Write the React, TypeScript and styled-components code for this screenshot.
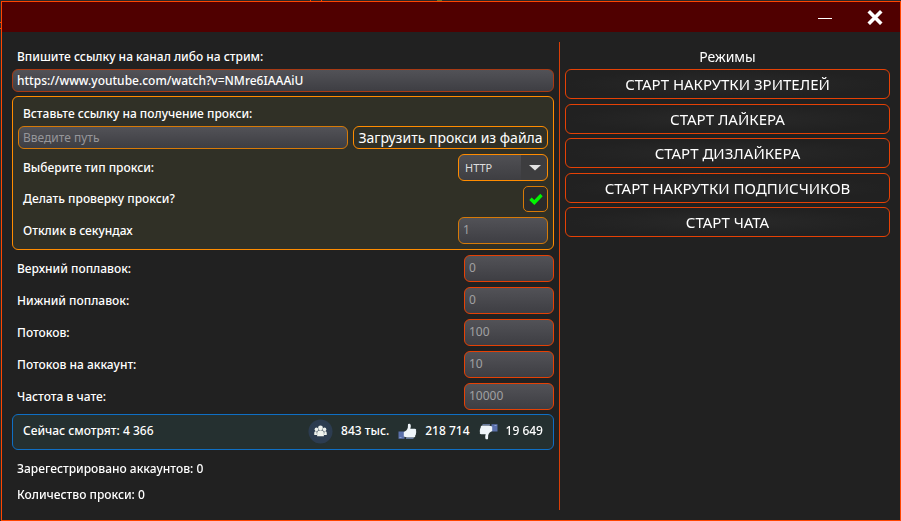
import React, { useEffect, useRef } from "react";
import styled, { createGlobalStyle, css } from "styled-components";

const orange = "#ff4500";
const amber = "#ff8c00";

const GlobalStyle = createGlobalStyle`
  * { box-sizing: border-box; }
  body {
    margin: 0;
    background: #2b2b2b;
    color: #ffffff;
    font-family: "Comic Sans MS", "Noto Sans", sans-serif;
    font-size: 12px;
    line-height: 18px;
  }
  button, input, select { font: inherit; color: inherit; margin: 0; }
`;

const Backdrop = styled.div`
  min-height: 100vh;
  padding: 1px 0 0 1px;
  display: flex;
  background:
    linear-gradient(#66752e, #66752e) 437px 0 / 5px 1px no-repeat,
    linear-gradient(${orange}, ${orange}) 310px 0 / 1px 1px no-repeat,
    linear-gradient(${orange}, ${orange}) 321px 0 / 1px 1px no-repeat,
    linear-gradient(${orange}, ${orange}) 0 22px / 1px 1px no-repeat,
    linear-gradient(${orange}, ${orange}) 0 28px / 1px 1px no-repeat,
    #2b2b2b;
`;

const Window = styled.main`
  flex: 1;
  display: flex;
  flex-direction: column;
  border: 1px solid ${orange};
  background: #212121;
`;

const TitleBar = styled.header`
  display: flex;
  justify-content: flex-end;
  height: 30px;
  background: #500000;
`;

const TitleButton = styled.button`
  display: grid;
  place-items: center;
  width: 50px;
  padding: 0;
  border: 0;
  background: transparent;
`;

const Body = styled.div`
  flex: 1;
  display: grid;
  grid-template-columns: minmax(0, 558fr) minmax(0, 340fr);
  padding: 10px 0;
`;

const Settings = styled.section`
  padding: 6px 5px 0 10px;
  border-right: 1px solid #d93e06;
`;

const Modes = styled.section`
  padding: 6px 10px 0 5px;
`;

const Label = styled.label<{ $inset?: number }>`
  display: block;
  font-weight: 500;
  padding-left: ${(p) => p.$inset ?? 0}px;
`;

const fieldLook = css<{ $accent: string }>`
  border: 1px solid ${(p) => p.$accent};
  border-radius: 6px;
  background: linear-gradient(#525257, #3e3e43);
  outline: none;
`;

const TextField = styled.input<{ $accent: string }>`
  ${fieldLook}
  display: block;
  width: 100%;
  min-width: 0;
  height: 23px;
  padding: 0 4px;
  &::placeholder { color: #96969a; opacity: 1; }
`;

const UrlField = styled(TextField)`
  margin: 3px 0 4px;
  font-weight: 500;
  caret-color: #000000;
`;

const NumberField = styled.input<{ $accent: string }>`
  ${fieldLook}
  width: 90px;
  height: 27px;
  padding: 0 4px 2px;
  color: #a0a0a2;
`;

const ProxyGroup = styled.section`
  display: flex;
  flex-direction: column;
  gap: 5px;
  padding: 8px 5px 5px;
  border: 1px solid ${amber};
  border-radius: 6px;
  background: #303026;
`;

const PathBlock = styled.div`
  display: grid;
  gap: 3px;
`;

const PathRow = styled.div`
  display: flex;
  gap: 5px;
`;

const LoadButton = styled.button`
  flex: none;
  width: 195px;
  height: 23px;
  padding: 0;
  border: 1px solid ${amber};
  border-radius: 6px;
  background: transparent;
  font-size: 14px;
  white-space: nowrap;
`;

const Row = styled.div`
  display: flex;
  align-items: center;
  justify-content: space-between;
`;

const Rows = styled.div`
  display: grid;
  gap: 5px;
  margin: 5px 0 4px;
`;

const SelectBox = styled.div`
  display: grid;
  width: 90px;
  height: 27px;
  > * { grid-area: 1 / 1; }
  svg { justify-self: end; align-self: center; margin-right: 7px; pointer-events: none; }
`;

const TypeSelect = styled.select`
  appearance: none;
  width: 100%;
  padding: 0 6px;
  border: 1px solid ${amber};
  border-radius: 6px;
  outline: none;
  background: linear-gradient(90deg, transparent 62px, #3d3d3f 62px), linear-gradient(#505054, #3e3e42);
  font-size: 11px;
  color: #dedede;
`;

const CheckBox = styled.div`
  display: grid;
  width: 25px;
  height: 26px;
  > * { grid-area: 1 / 1; }
  svg { place-self: center; pointer-events: none; visibility: hidden; }
  input:checked + svg { visibility: visible; }
`;

const CheckInput = styled.input`
  appearance: none;
  width: 100%;
  height: 100%;
  border: 1px solid #d77a08;
  border-radius: 5px;
  background: #2b2b2b;
`;

const Stats = styled.div`
  display: flex;
  align-items: center;
  justify-content: space-between;
  height: 36px;
  padding: 0 10px;
  border: 1px solid #0f6fc4;
  border-radius: 6px;
  background: #253030;
  font-weight: 500;
  padding-bottom: 2px;
`;

const Counters = styled.div`
  display: flex;
  align-items: center;
  gap: 9px;
`;

const Counter = styled.span`
  display: flex;
  align-items: center;
  gap: 8px;
`;

const Totals = styled.div`
  display: grid;
  gap: 8px;
  padding: 10px 5px 0;
  font-weight: 500;
`;

const ModesTitle = styled.h2`
  margin: 0 0 3px;
  font-size: 14px;
  font-weight: 400;
  line-height: 18px;
  text-align: center;
`;

const ModeList = styled.div`
  display: flex;
  flex-direction: column;
  justify-content: space-between;
  min-height: 168px;
`;

const ModeButton = styled.button`
  height: 30px;
  padding: 0;
  border: 1px solid #e54105;
  border-radius: 6px;
  background: radial-gradient(ellipse at center, #292929, #212121 70%);
  font-size: 15px;
`;

const MinimizeIcon = () => (
  <svg width="16" height="16" viewBox="0 0 16 16" aria-hidden="true">
    <path d="M1 9.5h14" stroke="#fff" />
  </svg>
);

const CloseIcon = () => (
  <svg width="16" height="16" viewBox="0 0 16 16" aria-hidden="true">
    <path d="M3 3.500l10 10M13 3.500L3 13.500" stroke="#fff" strokeWidth="3.600" strokeLinecap="square" />
  </svg>
);

const ArrowIcon = () => (
  <svg width="12" height="6" viewBox="0 0 12 6" aria-hidden="true">
    <path d="M0 0h12L6 5.5z" fill="#e2e2e2" />
  </svg>
);

const CheckIcon = () => (
  <svg width="14" height="12" viewBox="0 0 14 12" aria-hidden="true">
    <path d="M1.500 5.800l3.800 3.700L12.500 2" fill="none" stroke="#00f600" strokeWidth="3.400" />
  </svg>
);

const PeopleIcon = () => (
  <svg width="25" height="25" viewBox="0 0 26 26" aria-hidden="true">
    <circle cx="13" cy="13" r="12.5" fill="#2c3c50" />
    <g fill="#eef2ee">
      <circle cx="13" cy="9.3" r="2.5" />
      <circle cx="8.8" cy="10.8" r="1.9" />
      <circle cx="17.2" cy="10.8" r="1.9" />
      <path d="M9.5 18v-3.5c0-2 1.2-2.8 3.5-2.8s3.5.8 3.5 2.8V18z" />
      <path d="M6.5 16.7v-2c0-1.5.8-2.2 2.3-2.2l.6 4.2zM19.5 16.7v-2c0-1.5-.8-2.2-2.3-2.2l-.6 4.2z" />
    </g>
  </svg>
);

const Thumb = () => (
  <>
    <path d="M.500 8.500H6.500V15.800H.500z" fill="#5b70ab" />
    <path d="M1.500 14.500h2" stroke="#8ea2d2" />
    <path
      d="M5.800 9c1.800-.6 3.400-2.200 4-4.200L10 1.300c.2-1 2.300-.9 2.700.5.3 1.300.1 2.700-.4 4h4.500c1.300 0 1.900 1.300 1 2.200.7.5.7 1.600 0 2 .5.800.2 1.700-.5 2.100.3 1.300-.4 2.400-1.700 2.400H9L5.800 13.600z"
      fill="#eff5fa"
    />
    <path d="M8 15.200h7.500" stroke="#8297c8" />
  </>
);

const LikeIcon = () => (
  <svg width="19" height="17" viewBox="0 0 19 17" aria-hidden="true">
    <Thumb />
  </svg>
);

const DislikeIcon = () => (
  <svg width="19" height="17" viewBox="0 0 19 17" aria-hidden="true">
    <g transform="rotate(180 9.5 8.5)">
      <Thumb />
    </g>
  </svg>
);

const limits = [
  ["upper", "Верхний поплавок:", "0"],
  ["lower", "Нижний поплавок:", "0"],
  ["threads", "Потоков:", "100"],
  ["perAccount", "Потоков на аккаунт:", "10"],
  ["chatRate", "Частота в чате:", "10000"],
];

const modes = [
  "СТАРТ НАКРУТКИ ЗРИТЕЛЕЙ",
  "СТАРТ ЛАЙКЕРА",
  "СТАРТ ДИЗЛАЙКЕРА",
  "СТАРТ НАКРУТКИ ПОДПИСЧИКОВ",
  "СТАРТ ЧАТА",
];

export default function App() {
  const urlRef = useRef<HTMLInputElement>(null);

  useEffect(() => {
    const field = urlRef.current;
    if (field) {
      field.focus();
      field.setSelectionRange(field.value.length, field.value.length);
    }
  }, []);

  return (
    <>
      <GlobalStyle />
      <Backdrop>
        <Window>
          <TitleBar>
            <TitleButton aria-label="Свернуть"><MinimizeIcon /></TitleButton>
            <TitleButton aria-label="Закрыть"><CloseIcon /></TitleButton>
          </TitleBar>
          <Body>
            <Settings>
              <Label htmlFor="url" $inset={5}>Впишите ссылку на канал либо на стрим:</Label>
              <UrlField
                ref={urlRef}
                id="url"
                $accent="#a83a14"
                defaultValue="https://www.youtube.com/watch?v=NMre6IAAAiU"
              />
              <ProxyGroup>
                <PathBlock>
                  <Label htmlFor="path" $inset={5}>Вставьте ссылку на получение прокси:</Label>
                  <PathRow>
                    <TextField id="path" $accent="#d77a08" placeholder="Введите путь" />
                    <LoadButton>Загрузить прокси из файла</LoadButton>
                  </PathRow>
                </PathBlock>
                <Row>
                  <Label htmlFor="type" $inset={5}>Выберите тип прокси:</Label>
                  <SelectBox>
                    <TypeSelect id="type"><option>HTTP</option></TypeSelect>
                    <ArrowIcon />
                  </SelectBox>
                </Row>
                <Row>
                  <Label htmlFor="check" $inset={5}>Делать проверку прокси?</Label>
                  <CheckBox>
                    <CheckInput id="check" type="checkbox" defaultChecked />
                    <CheckIcon />
                  </CheckBox>
                </Row>
                <Row>
                  <Label htmlFor="timeout" $inset={5}>Отклик в секундах</Label>
                  <NumberField id="timeout" $accent="#d77a08" defaultValue="1" />
                </Row>
              </ProxyGroup>
              <Rows>
                {limits.map(([id, label, value]) => (
                  <Row key={id}>
                    <Label htmlFor={id} $inset={5}>{label}</Label>
                    <NumberField id={id} $accent="#e54105" defaultValue={value} />
                  </Row>
                ))}
              </Rows>
              <Stats>
                <span>Сейчас смотрят: 4 366</span>
                <Counters>
                  <Counter><PeopleIcon />843 тыс.</Counter>
                  <Counter><LikeIcon />218 714</Counter>
                  <Counter><DislikeIcon />19 649</Counter>
                </Counters>
              </Stats>
              <Totals>
                <span>Зарегестрировано аккаунтов: 0</span>
                <span>Количество прокси: 0</span>
              </Totals>
            </Settings>
            <Modes>
              <ModesTitle>Режимы</ModesTitle>
              <ModeList>
                {modes.map((mode) => <ModeButton key={mode}>{mode}</ModeButton>)}
              </ModeList>
            </Modes>
          </Body>
        </Window>
      </Backdrop>
    </>
  );
}
